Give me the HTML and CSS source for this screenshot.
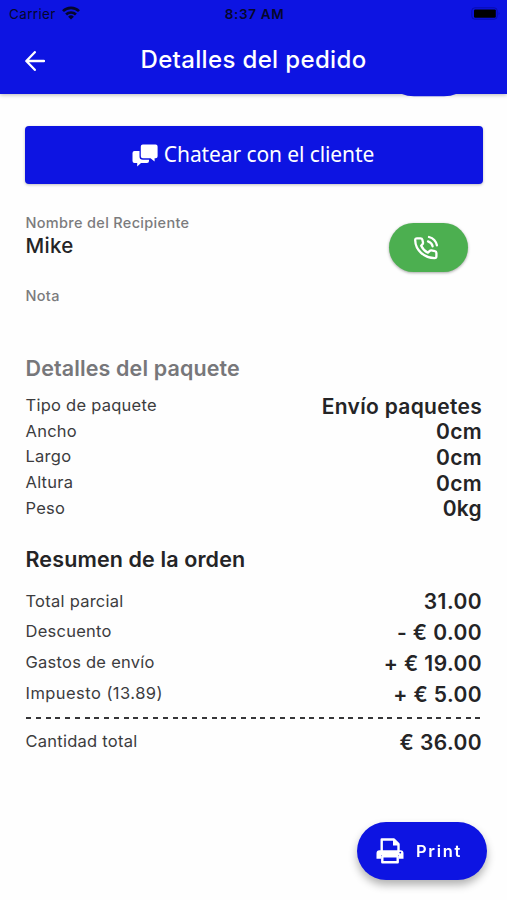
FILE: index.html
```html
<!DOCTYPE html>
<html lang="es">
<head>
<meta charset="utf-8">
<meta name="viewport" content="width=device-width, initial-scale=1">
<title>Detalles del pedido</title>
<link rel="stylesheet" href="styles.css">
</head>
<body>
<header class="header">
  <div class="status">
    <div class="carrier"><span>Carrier</span>
      <svg class="wifi" viewBox="0 0 18 14" width="18" height="14"><g fill="none" stroke="currentColor" stroke-width="2.7"><path d="M1 5.1a11.4 11.4 0 0 1 16 0"/><path d="M4.1 8.5a7 7 0 0 1 9.8 0"/></g><path d="M9 13.5 6.1 10.7a4.1 4.1 0 0 1 5.8 0z" fill="currentColor"/></svg>
    </div>
    <span class="clock">8:37 AM</span>
    <svg class="battery" viewBox="0 0 30 13" width="30" height="13"><rect x=".8" y=".8" width="25.4" height="11.4" rx="3" fill="none" stroke="#080cb0"/><rect x="3" y="2.4" width="21.8" height="8.4" rx="1.2"/><path d="M27.7 4.8q1.7 1.7 0 3.4z" fill="#080cb0"/></svg>
  </div>
  <div class="toolbar">
    <svg class="back" viewBox="0 0 20 20" width="20" height="20"><path d="M9.8 1.2 1.3 10l8.5 8.8M1.5 10H19" fill="none" stroke="#fff" stroke-width="2.3" stroke-linecap="round" stroke-linejoin="round"/></svg>
    <h1 class="title">Detalles del pedido</h1>
  </div>
  <svg class="peek" viewBox="0 0 54 3" width="54" height="3"><path d="M0 0h54Q49 2.2 42 2.2H12Q5 2.2 0 0z" fill="#0d14e2"/></svg>
</header>
<main class="content">
  <button class="chat">
    <svg viewBox="0 0 26 23" width="26" height="23"><path d="M10.8.6h12.8q2 0 2 2v9.6q0 2-2 2h-1v3.2l-4.1-3.2h-7.700q-2 0-2-2V2.6q0-2 2-2z" fill="#fff"/><path d="M2.500 7h5v5.500q0 3.300 3.300 3.300H17v1.100q0 2-2 2H9l-3.800 3.500v-3.500H2.500q-2 0-2-2V9q0-2 2-2z" fill="#fff"/></svg>
    <span>Chatear con el cliente</span>
  </button>
  <section class="recipient">
    <div class="person">
      <p class="caption">Nombre del Recipiente</p>
      <p class="name">Mike</p>
      <p class="caption note">Nota</p>
    </div>
    <button class="call" aria-label="Llamar">
      <svg viewBox="0 0 26 26" width="26" height="26"><g fill="none" stroke="#fff" stroke-width="2.300" stroke-linecap="round" stroke-linejoin="round"><path d="M4 3.300h3.500q1.500 0 1.800 1.300l.7 3q.2 1-.6 1.700l-1.200 1.400q2.200 4.700 6.700 7l1.900-1.800q.7-.7 1.600-.5l3.500.8q1.500.3 1.500 1.700v3.400q0 1.800-1.800 1.800C11 23 2.500 15 2.200 5.200q-.1-1.900 1.800-1.900z"/><path d="M16 2q6.500 1.800 7.900 8.300M15 6.400q3.800 1.200 4.600 4.900"/></g></svg>
    </button>
  </section>
  <section class="package">
    <h2 class="heading muted">Detalles del paquete</h2>
    <dl class="rows">
      <div class="row"><dt>Tipo de paquete</dt><dd>Envío paquetes</dd></div>
      <div class="row"><dt>Ancho</dt><dd>0cm</dd></div>
      <div class="row"><dt>Largo</dt><dd>0cm</dd></div>
      <div class="row"><dt>Altura</dt><dd>0cm</dd></div>
      <div class="row"><dt>Peso</dt><dd>0kg</dd></div>
    </dl>
  </section>
  <section class="summary">
    <h2 class="heading">Resumen de la orden</h2>
    <dl class="rows">
      <div class="row"><dt>Total parcial</dt><dd>31.00</dd></div>
      <div class="row"><dt>Descuento</dt><dd>- € 0.00</dd></div>
      <div class="row"><dt>Gastos de envío</dt><dd>+ € 19.00</dd></div>
      <div class="row"><dt class="tax">Impuesto (13.89)</dt><dd>+ € 5.00</dd></div>
    </dl>
    <div class="divider"></div>
    <dl class="rows"><div class="row"><dt>Cantidad total</dt><dd>€ 36.00</dd></div></dl>
  </section>
</main>
<button class="print">
  <svg viewBox="0 0 28 26" width="28" height="26"><g fill="none" stroke="#fff" stroke-width="2.400" stroke-linejoin="round"><path d="M5.700 13V1.500h12.300l4.500 4.500V13"/><path d="M6.300 18.200h15.400v6H6.300z"/></g><path d="M17 1v6.500h6z" fill="#fff"/><path fill-rule="evenodd" d="M3.500 12.200h21q3 0 3 3v5.600h-4.600v-3.700H5.100v3.700H.5v-5.600q0-3 3-3zM24.300 13.700a.9.9 0 1 0 0 1.800.9.9 0 0 0 0-1.800z" fill="#fff"/></svg>
  <span>Print</span>
</button>
</body>
</html>
```
FILE: styles.css
```css
* { box-sizing: border-box; }
body { margin: 0; width: 507px; height: 900px; overflow: hidden; background: #fefefe; color: #242426; font-family: Inter, sans-serif; }
h1, h2, p, dl, dd { margin: 0; }
button { border: 0; padding: 0; color: #fff; font-family: inherit; }
svg { display: block; flex: none; }

.header { position: relative; height: 94px; background: #0d14e2; box-shadow: 0 1px 4px rgba(0,0,0,.28); }
.status { display: grid; grid-template-columns: 1fr auto 1fr; align-items: center; height: 27px; padding: 0 6px 0 9px; color: #05072c; font-size: 13.5px; }
.carrier { display: flex; align-items: center; gap: 6px; letter-spacing: .35px; }
.wifi { margin-top: -2px; }
.clock { margin-right: 1px; font-weight: 600; font-size: 13.5px; letter-spacing: .65px; }
.battery { justify-self: end; }
.toolbar { display: grid; grid-template-columns: 48px 1fr 48px; align-items: center; height: 67px; }
.back { margin-left: 25px; }
.title { margin-top: -2px; color: #fff; font-size: 24px; font-weight: 500; letter-spacing: .35px; text-align: center; }
.peek { position: absolute; top: 94px; left: 402px; }

.content { padding: 31.5px 25px 0; }
.chat { display: flex; align-items: center; justify-content: center; gap: 6px; width: 458px; height: 58.5px; padding-right: 2px; border-radius: 4px; background: #0d14e2; box-shadow: 0 1px 3px rgba(0,0,0,.25); font: 400 21px "Noto Sans", sans-serif; letter-spacing: -.1px; }
.chat svg { margin-top: 2px; }
.chat span { margin-top: -1.5px; }
.recipient { display: flex; justify-content: space-between; height: 130px; padding: 30px 14px 0 .5px; }
.caption { color: #7b7b7d; font-size: 14.5px; font-weight: 500; line-height: 18px; letter-spacing: .32px; }
.name { font-size: 20.5px; font-weight: 500; line-height: 27px; letter-spacing: .3px; }
.note { margin-top: 28px; }
.call { display: grid; place-items: center; width: 79px; height: 49px; margin-top: 9px; padding-right: 5px; border-radius: 25px; background: #4caf50; box-shadow: 0 1px 3px rgba(0,0,0,.35); }

.package, .summary { padding: 0 .5px; }
.heading { font-size: 21.5px; font-weight: 600; line-height: 28px; letter-spacing: .12px; }
.muted { color: #77777a; }
.package { padding-top: 40px; }
.package .rows { margin-top: 10px; }
.row { display: flex; justify-content: space-between; align-items: center; height: 25.7px; }
dt { color: #3c3c3e; font-size: 16.5px; letter-spacing: .25px; }
.tax { letter-spacing: .45px; }
dd { position: relative; top: 1.2px; margin-right: -.5px; font-size: 21px; font-weight: 600; letter-spacing: .3px; }
.summary { padding-top: 24.5px; }
.summary .rows { margin-top: 12.5px; }
.summary dd { letter-spacing: .42px; }
.summary .row { height: 30.7px; }
.divider { height: 1.6px; margin: 9px 0 0; background: repeating-linear-gradient(90deg, #363638 0 5px, transparent 5px 9.77px); }
.summary .divider + .rows { margin-top: 7px; }

.print { position: fixed; right: 20px; bottom: 20px; display: flex; align-items: center; gap: 12px; width: 130px; height: 58px; padding-left: 19px; border-radius: 29px; background: #0d14e2; box-shadow: 0 5px 9px rgba(0,0,0,.3); font-size: 16.5px; font-weight: 600; letter-spacing: 1.7px; }
```
